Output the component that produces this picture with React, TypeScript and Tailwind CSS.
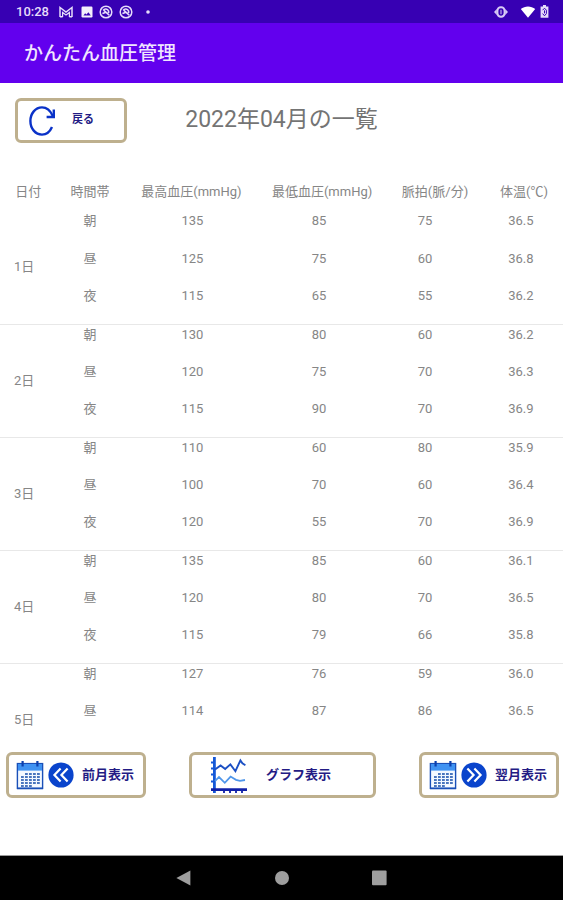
import React from 'react';

interface Reading {
  time: string;
  high: number;
  low: number;
  pulse: number;
  temp: string;
}

interface DayRecord {
  day: string;
  readings: Reading[];
}

const records: DayRecord[] = [
  {
    day: '1日',
    readings: [
      { time: '朝', high: 135, low: 85, pulse: 75, temp: '36.5' },
      { time: '昼', high: 125, low: 75, pulse: 60, temp: '36.8' },
      { time: '夜', high: 115, low: 65, pulse: 55, temp: '36.2' },
    ],
  },
  {
    day: '2日',
    readings: [
      { time: '朝', high: 130, low: 80, pulse: 60, temp: '36.2' },
      { time: '昼', high: 120, low: 75, pulse: 70, temp: '36.3' },
      { time: '夜', high: 115, low: 90, pulse: 70, temp: '36.9' },
    ],
  },
  {
    day: '3日',
    readings: [
      { time: '朝', high: 110, low: 60, pulse: 80, temp: '35.9' },
      { time: '昼', high: 100, low: 70, pulse: 60, temp: '36.4' },
      { time: '夜', high: 120, low: 55, pulse: 70, temp: '36.9' },
    ],
  },
  {
    day: '4日',
    readings: [
      { time: '朝', high: 135, low: 85, pulse: 60, temp: '36.1' },
      { time: '昼', high: 120, low: 80, pulse: 70, temp: '36.5' },
      { time: '夜', high: 115, low: 79, pulse: 66, temp: '35.8' },
    ],
  },
  {
    day: '5日',
    readings: [
      { time: '朝', high: 127, low: 76, pulse: 59, temp: '36.0' },
      { time: '昼', high: 114, low: 87, pulse: 86, temp: '36.5' },
    ],
  },
];

const rowHeights = ['h-[38px]', 'h-[37px]', 'h-[38px]'];

const SyncBadge = () => (
  <svg width="14" height="14" viewBox="0 0 14 14" fill="none" stroke="#e6dcfa">
    <circle cx="7" cy="7" r="5.8" strokeWidth="1.5" />
    <path d="M4.2 5.4 C5.4 3.4 8.6 3.6 9.6 6 V8 M3.4 8.6 L6.4 7.4 M4.6 5.2 L10.2 10.2" strokeWidth="1.6" />
  </svg>
);

const StatusBar = () => (
  <div className="flex h-[23px] shrink-0 items-center justify-between bg-[#3700b3] pl-4 pr-3.5 text-[#e6dcfa]">
    <div className="flex items-center gap-1.5">
      <span className="mr-1 text-[13px] font-medium leading-5">10:28</span>
      <svg width="14" height="14" viewBox="0 0 14 14" fill="none" stroke="#e6dcfa" strokeWidth="1.5">
        <path d="M1 12 V2.4 L7 7 L13 2.4 V12" />
        <path d="M3.6 12 V7.4 L7 10 L10.4 7.4 V12" strokeWidth="1.2" />
        <path d="M1 11.8 H3.6 M10.4 11.8 H13" />
      </svg>
      <svg className="ml-0.5" width="12" height="12" viewBox="0 0 12 12">
        <rect x="0.5" y="0.5" width="11" height="11" rx="1.2" fill="#f3eefc" />
        <path d="M2.4 9.4 L4.2 7.2 L5.4 8.6 L7.4 6.2 L9.8 9.4 Z" fill="#3700b3" />
      </svg>
      <SyncBadge />
      <SyncBadge />
      <svg className="ml-1.5" width="6" height="6" viewBox="0 0 6 6">
        <circle cx="3" cy="3" r="1.8" fill="#e6dcfa" />
      </svg>
    </div>
    <div className="flex items-center">
      <svg width="14" height="12" viewBox="0 0 14 12">
        <path d="M0 6 L2.8 3 V9 Z M14 6 L11.2 3 V9 Z" fill="#d8caf6" />
        <rect x="3.4" y="1.3" width="7.2" height="9.4" rx="3.4" fill="#3700b3" stroke="#d8caf6" strokeWidth="2" />
        <path d="M7 3.8 V8.2" stroke="#d8caf6" strokeWidth="1" />
      </svg>
      <svg className="ml-3" width="16" height="12" viewBox="0 0 16 12">
        <path d="M0.8 3 C4.8 -0.4 11.2 -0.4 15.2 3 L8 11.8 Z" fill="#ffffff" />
      </svg>
      <svg className="ml-1" width="9" height="13" viewBox="0 0 9 13">
        <path d="M3 0 H6 V1.4 H8.4 V12.8 H0.6 V1.4 H3 Z" fill="#e6dcfa" />
        <path d="M2.6 5.2 L4.5 3.2 L6.4 5.2 V8.6 L4.5 10.8 L2.6 8.6 M4.5 5.4 V8.4" fill="none" stroke="#3700b3" strokeWidth="1" />
      </svg>
    </div>
  </div>
);

const BackIcon = () => (
  <svg width="28" height="32" viewBox="0 0 28 32" fill="none" stroke="#0a32c8" strokeWidth="2.4">
    <path d="M24 22 C21.8 27 18 29.6 14 29.6 C7.4 29.6 2.4 23.6 2.4 16 C2.4 8.4 7.4 2.4 14 2.4 C18.6 2.4 22.4 5.6 24.8 11" />
    <path d="M25.8 4.6 V12 H18.6" />
  </svg>
);

const CalendarIcon = () => (
  <svg width="28" height="30" viewBox="0 0 28 30">
    <rect x="1.4" y="3.6" width="25.2" height="24.8" fill="#f4f9ff" stroke="#1a50b8" strokeWidth="1.4" />
    <rect x="2" y="4" width="24" height="6.6" fill="#3f92f2" />
    <path d="M1 28.4 H27" stroke="#1a50b8" strokeWidth="1.6" />
    <path d="M6.6 1 V6.4 M21.4 1 V6.4" stroke="#0b3fae" strokeWidth="2.2" />
    <path
      d="M9 14 H24 M5 17 H24 M5 20 H24 M5 23 H24 M5 26 H16"
      stroke="#4a76be"
      strokeWidth="2"
      strokeDasharray="2.8 1.2"
    />
  </svg>
);

const PrevIcon = () => (
  <svg width="26" height="26" viewBox="0 0 26 26" fill="none">
    <circle cx="13" cy="13" r="12.6" fill="#0a44cc" />
    <path d="M12.6 6.4 L6.4 13 L12.6 19.6 M19.6 6.4 L13.4 13 L19.6 19.6" stroke="#ffffff" strokeWidth="2.2" />
  </svg>
);

const NextIcon = () => (
  <svg width="26" height="26" viewBox="0 0 26 26" fill="none">
    <circle cx="13" cy="13" r="12.6" fill="#0a44cc" />
    <path d="M6.4 6.4 L12.6 13 L6.4 19.6 M13.4 6.4 L19.6 13 L13.4 19.6" stroke="#ffffff" strokeWidth="2.2" />
  </svg>
);

const GraphIcon = () => (
  <svg width="38" height="38" viewBox="0 0 38 38" fill="none">
    <path d="M4.4 1 V37" stroke="#1458d8" strokeWidth="2.8" />
    <path d="M1 6.4 H4 M1 12.4 H4 M1 18.4 H4 M1 25.4 H4" stroke="#1458d8" strokeWidth="2" />
    <path d="M1 33.6 H37" stroke="#1020a8" strokeWidth="2.6" />
    <path d="M14 33 V37 M20 33 V37 M26 33 V37 M32 33 V37" stroke="#1020a8" strokeWidth="1.8" />
    <path d="M5 13.6 L10.6 9.4 L15.2 13 L20.4 8.4 L25.4 15.2 L30.4 4.4 L32.4 7.4 L35.4 9.2" stroke="#1c50c4" strokeWidth="1.9" />
    <path d="M5 25.2 L9 21 L14.8 26.8 L20.6 20.6 L26 23.8 L30 24.8 L35 24" stroke="#4f96ea" strokeWidth="1.8" />
  </svg>
);

export default function App() {
  return (
    <div className="flex h-screen flex-col bg-white font-[Roboto,'Noto_Sans_CJK_JP',sans-serif] text-[#868686]">
      <StatusBar />

      <header className="flex h-[60px] shrink-0 items-center bg-[#6200ee] px-6 pt-0.5">
        <span className="text-[19px] font-medium leading-7 text-[#f0e6ff]">かんたん血圧管理</span>
      </header>

      {/* Month title */}
      <div className="grid h-[90px] shrink-0 grid-cols-[1fr_auto_1fr] items-start px-[15px] pt-[15px]">
        <button
          type="button"
          className="flex h-[45px] w-28 items-center gap-4 rounded-md border-[3px] border-[#beb08e] bg-white pl-2.5 text-[11px] font-bold text-[#231b84]"
        >
          <BackIcon />
          <span>戻る</span>
        </button>
        <h1 className="pt-1.5 text-[23px] leading-8 text-[#747474]">2022年04月の一覧</h1>
      </div>

      {/* Readings */}
      <main className="min-h-0 flex-1 overflow-y-auto [scrollbar-width:none]">
        <table className="w-full table-fixed border-collapse text-center text-[13px] leading-5">
          <colgroup>
            <col className="w-[10%]" />
            <col className="w-[12%]" />
            <col className="w-[24%]" />
            <col className="w-[21%]" />
            <col className="w-[17%]" />
            <col className="w-[16%]" />
          </colgroup>
          <thead>
            <tr className="h-[38px] whitespace-nowrap">
              <th className="p-0 font-normal">日付</th>
              <th className="p-0 font-normal">時間帯</th>
              <th className="p-0 font-normal">最高血圧(mmHg)</th>
              <th className="p-0 pl-2 font-normal">最低血圧(mmHg)</th>
              <th className="p-0 pl-5 font-normal">脈拍(脈/分)</th>
              <th className="p-0 pl-3 font-normal">体温(℃)</th>
            </tr>
          </thead>
          {records.map((record) => (
            <tbody key={record.day} className="border-b border-[#e8e8e8] last:border-b-0">
              {record.readings.map((reading, i) => (
                <tr key={reading.time} className={`${rowHeights[i]} align-top`}>
                  {i === 0 && (
                    <th rowSpan={3} className="p-0 pr-2 align-middle font-normal">
                      {record.day}
                    </th>
                  )}
                  <td>{reading.time}</td>
                  <td className="pl-0.5">{reading.high}</td>
                  <td className="pl-0.5">{reading.low}</td>
                  <td>{reading.pulse}</td>
                  <td className="pl-1.5">{reading.temp}</td>
                </tr>
              ))}
              {record.readings.length < 3 && (
                <tr className="h-[38px]">
                  <td colSpan={5} />
                </tr>
              )}
            </tbody>
          ))}
        </table>
      </main>

      {/* Actions */}
      <div className="flex shrink-0 justify-between pb-[57px] pl-1.5 pr-1 pt-2.5 text-[13px] font-bold text-[#231b84]">
        <button type="button" className="flex h-[46px] w-[140px] items-center gap-1 rounded-md border-[3px] border-[#beb08e] bg-white pl-[7px]">
          <CalendarIcon />
          <PrevIcon />
          <span className="ml-1">前月表示</span>
        </button>
        <button type="button" className="flex h-[46px] w-[187px] items-center gap-[18px] rounded-md border-[3px] border-[#beb08e] bg-white pl-[18px]">
          <GraphIcon />
          <span>グラフ表示</span>
        </button>
        <button type="button" className="flex h-[46px] w-[140px] items-center gap-1 rounded-md border-[3px] border-[#beb08e] bg-white pl-[7px]">
          <CalendarIcon />
          <NextIcon />
          <span className="ml-1">翌月表示</span>
        </button>
      </div>

      {/* System navigation */}
      <nav className="flex h-[45px] shrink-0 items-center justify-center gap-[82px] border-t border-[#9a9a9a] bg-black">
        <button type="button" aria-label="戻る">
          <svg width="16" height="16" viewBox="0 0 16 16">
            <path d="M14.4 0.6 V15.4 L0.4 8 Z" fill="#9e9e9e" />
          </svg>
        </button>
        <button type="button" aria-label="ホーム">
          <svg width="16" height="16" viewBox="0 0 16 16">
            <circle cx="8" cy="8" r="7" fill="#9e9e9e" />
          </svg>
        </button>
        <button type="button" aria-label="アプリ履歴">
          <svg width="16" height="16" viewBox="0 0 16 16">
            <rect x="0" y="0.6" width="14.6" height="14.6" rx="1" fill="#9e9e9e" />
          </svg>
        </button>
      </nav>
    </div>
  );
}
